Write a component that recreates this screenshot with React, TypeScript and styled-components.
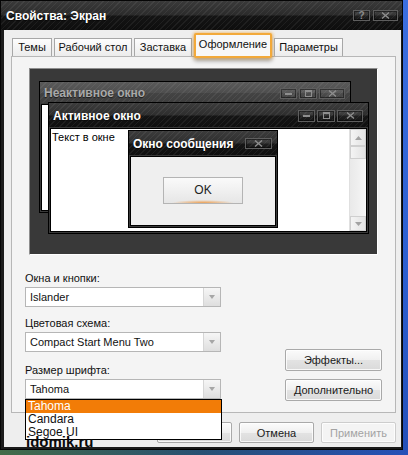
import React from 'react';
import styled, { createGlobalStyle, css } from 'styled-components';

const GlobalStyle = createGlobalStyle`
  html, body {
    margin: 0;
    padding: 0;
  }
  body {
    font-family: "Liberation Sans", Arial, sans-serif;
    font-size: 11px;
    color: #000;
    background: #2c5bc4;
  }
`;

// dark glass look shared by every caption bar
const hatch = (top: string, mid: string, low: string, bottom: string) => css`
  background-image:
    repeating-linear-gradient(135deg, rgba(255, 255, 255, 0.06) 0 1px, transparent 1px 4px),
    linear-gradient(180deg, ${top} 0%, ${mid} 48%, ${low} 52%, ${bottom} 100%);
`;

const Desktop = styled.div`
  position: relative;
  width: 408px;
  height: 455px;
  overflow: hidden;
  background:
    linear-gradient(90deg, rgba(70, 110, 60, 0.9) 0%, rgba(40, 80, 70, 0.6) 50%, rgba(30, 70, 170, 0) 100%) bottom / 100% 8px no-repeat,
    linear-gradient(180deg, #3c6fe0 0%, #2d5fd0 60%, #2550b8 100%);
`;

const Window = styled.div`
  width: 403px;
  height: 450px;
  box-sizing: border-box;
  display: flex;
  flex-direction: column;
  background: #1b1b1b;
  border: 1px solid #050505;
  box-shadow: inset 0 1px 0 #4a4a4a;
`;

const TitleBar = styled.div`
  height: 29px;
  flex: none;
  display: flex;
  align-items: center;
  justify-content: space-between;
  padding: 0 4px 0 5px;
  ${hatch('#3a3a3a', '#2b2b2b', '#141414', '#0e0e0e')}
`;

const Caption = styled.span<{ $dim?: boolean }>`
  font-weight: bold;
  font-size: 12px;
  color: ${(p) => (p.$dim ? '#a9a9a9' : '#fff')};
  white-space: nowrap;
  text-shadow: 0 1px 1px rgba(0, 0, 0, 0.6);
`;

const CaptionButtons = styled.div`
  display: flex;
  gap: 3px;
`;

const CaptionButton = styled.div<{ $w: number; $h?: number }>`
  width: ${(p) => p.$w}px;
  height: ${(p) => p.$h ?? 11}px;
  box-sizing: border-box;
  display: flex;
  align-items: center;
  justify-content: center;
  border: 1px solid #5e5e5e;
  background: linear-gradient(180deg, rgba(255, 255, 255, 0.08), rgba(255, 255, 255, 0.02));
  box-shadow: inset 0 0 0 1px rgba(0, 0, 0, 0.45);
  color: #8c8c8c;
  font-size: 10px;
  font-weight: bold;
  line-height: 1;
`;

const Body = styled.div`
  flex: 1;
  margin: 0 1px 2px 3px;
  padding: 4px 5px 0 7px;
  background: #eeeeee;
  display: flex;
  flex-direction: column;
`;

const TabRow = styled.div`
  flex: none;
  display: flex;
  align-items: flex-end;
  gap: 2px;
  height: 22px;
  padding-left: 1px;
  position: relative;
  z-index: 1;
`;

const Tab = styled.div<{ $w: number; $active?: boolean }>`
  width: ${(p) => p.$w}px;
  box-sizing: border-box;
  text-align: center;
  white-space: nowrap;
  border: 1px solid #a7a7a7;
  border-bottom: none;
  background: linear-gradient(180deg, #fdfdfd 0%, #ececec 100%);
  height: 18px;
  line-height: 17px;
  font-size: 11px;
  color: #111;
  ${(p) =>
    p.$active &&
    css`
      height: 25px;
      line-height: 19px;
      margin-bottom: -2px;
      border: 2px solid #f2a93a;
      border-radius: 2px;
      background: #f8f8f8;
      box-shadow: 0 0 3px 1px rgba(245, 170, 60, 0.55), 0 3px 4px rgba(0, 0, 0, 0.35);
    `}
`;

const Panel = styled.div`
  flex: none;
  height: 357px;
  box-sizing: border-box;
  border: 1px solid #b7b7b7;
  background: #f4f4f4;
  padding: 11px 13px 0 13px;
  display: flex;
  flex-direction: column;
`;

/* ---------- appearance preview ---------- */

const Preview = styled.div`
  position: relative;
  flex: none;
  width: 349px;
  height: 187px;
  margin-left: 4px;
  box-sizing: border-box;
  background: #393939;
  border: 1px solid;
  border-color: #8e8e8e #ffffff #ffffff #8e8e8e;
  overflow: hidden;
`;

const PreviewWindow = styled.div<{ $left: number; $top: number; $w: number; $h: number; $inactive?: boolean }>`
  position: absolute;
  left: ${(p) => p.$left}px;
  top: ${(p) => p.$top}px;
  width: ${(p) => p.$w}px;
  height: ${(p) => p.$h}px;
  box-sizing: border-box;
  display: flex;
  flex-direction: column;
  border: 1px solid #000;
  background: ${(p) => (p.$inactive ? '#484848' : '#1c1c1c')};
  box-shadow: inset 0 0 0 1px ${(p) => (p.$inactive ? '#5a5a5a' : '#3c3c3c')};
`;

const PreviewTitle = styled.div<{ $h: number; $inactive?: boolean }>`
  height: ${(p) => p.$h}px;
  flex: none;
  display: flex;
  align-items: center;
  justify-content: space-between;
  padding: 0 5px 0 4px;
  ${(p) =>
    p.$inactive
      ? hatch('#5a5a5a', '#4e4e4e', '#434343', '#3d3d3d')
      : hatch('#3c3c3c', '#2e2e2e', '#151515', '#0f0f0f')}
`;

const WindowButtons = styled.div`
  display: flex;
  gap: 2px;
`;

const ClientArea = styled.div`
  flex: 1;
  margin: 0 1px 1px 1px;
  display: flex;
  background: #fff;
  border: 1px solid #000;
  box-shadow: 0 0 0 1px #3a3a3a;
  overflow: hidden;
`;

const ClientText = styled.div`
  flex: 1;
  padding: 2px 1px;
  font-size: 11px;
`;

const ScrollBar = styled.div`
  width: 16px;
  display: flex;
  flex-direction: column;
  background: linear-gradient(90deg, #e9e9e9, #f6f6f6);
  border-left: 1px solid #e0e0e0;
`;

const ScrollPart = styled.div<{ $h?: number }>`
  height: ${(p) => (p.$h ? `${p.$h}px` : 'auto')};
  flex: ${(p) => (p.$h ? 'none' : 1)};
  box-sizing: border-box;
  display: flex;
  align-items: center;
  justify-content: center;
  ${(p) =>
    p.$h &&
    css`
      border: 1px solid #cfcfcf;
      background: linear-gradient(90deg, #f4f4f4, #e2e2e2);
    `}
`;

const MessageBody = styled.div`
  flex: 1;
  margin: 0 1px 1px 1px;
  display: flex;
  align-items: center;
  justify-content: center;
  background: #efefef;
  border: 1px solid #000;
  box-shadow: 0 0 0 1px #3a3a3a;
`;

const PreviewOk = styled.div`
  width: 80px;
  height: 27px;
  box-sizing: border-box;
  margin-bottom: 2px;
  display: flex;
  align-items: center;
  justify-content: center;
  font-size: 12px;
  color: #222;
  border: 1px solid #b4b4b4;
  background:
    radial-gradient(ellipse 40% 3px at 50% 100%, rgba(240, 140, 40, 0.8), transparent),
    linear-gradient(180deg, #fafafa 0%, #f0f0f0 50%, #e6e6e6 100%);
`;

/* ---------- settings below the preview ---------- */

const Settings = styled.div`
  flex: none;
  display: flex;
  justify-content: space-between;
`;

const Fields = styled.div`
  width: 196px;
  display: flex;
  flex-direction: column;
`;

const Field = styled.div<{ $gap: number }>`
  margin-top: ${(p) => p.$gap}px;
  position: relative;
`;

const Label = styled.div`
  line-height: 14px;
  color: #111;
`;

const Select = styled.div`
  margin-top: 2px;
  height: 20px;
  box-sizing: border-box;
  display: flex;
  border: 1px solid #b6b6b6;
  background: #fff;
`;

const SelectValue = styled.div`
  flex: 1;
  padding-left: 4px;
  line-height: 18px;
  white-space: nowrap;
  color: #111;
`;

const SelectArrow = styled.div`
  width: 16px;
  display: flex;
  align-items: center;
  justify-content: center;
  border-left: 1px solid #d6d6d6;
  background: linear-gradient(180deg, #f6f6f6, #dedede);

  &::after {
    content: '';
    border-left: 3px solid transparent;
    border-right: 3px solid transparent;
    border-top: 4px solid #a6a6a6;
  }
`;

const DropList = styled.div`
  position: absolute;
  left: 0;
  top: 100%;
  width: 197px;
  box-sizing: border-box;
  border: 1px solid #000;
  background: #fff;
  z-index: 2;
`;

const DropItem = styled.div<{ $selected?: boolean }>`
  height: 13px;
  line-height: 13px;
  padding-left: 2px;
  font-size: 12px;
  color: ${(p) => (p.$selected ? '#fff' : '#111')};
  background: ${(p) => (p.$selected ? '#f27c07' : 'transparent')};
`;

const SideButtons = styled.div`
  display: flex;
  flex-direction: column;
  justify-content: flex-end;
  gap: 8px;
  margin-bottom: -2px;
`;

const Button = styled.div<{ $w: number; $h?: number; $disabled?: boolean }>`
  width: ${(p) => p.$w}px;
  height: ${(p) => p.$h ?? 22}px;
  box-sizing: border-box;
  display: flex;
  align-items: center;
  justify-content: center;
  font-size: 11px;
  white-space: nowrap;
  color: ${(p) => (p.$disabled ? '#a3a3a3' : '#1a1a1a')};
  border: 1px solid ${(p) => (p.$disabled ? '#cdcdcd' : '#a9a9a9')};
  border-radius: 2px;
  background: ${(p) =>
    p.$disabled
      ? '#f4f4f4'
      : 'linear-gradient(180deg, #fbfbfb 0%, #f0f0f0 50%, #e3e3e3 51%, #dadada 100%)'};
  box-shadow: inset 0 0 0 1px rgba(255, 255, 255, 0.8);
`;

const DialogButtons = styled.div`
  flex: none;
  display: flex;
  justify-content: flex-end;
  gap: 7px;
  margin-top: 9px;
`;

const Watermark = styled.div`
  position: absolute;
  left: 26px;
  top: 433px;
  font-size: 15px;
  font-weight: bold;
  color: #0a0a0a;
  z-index: 3;
`;

/* ---------- small glyphs ---------- */

const Glyph = ({ kind }: { kind: 'min' | 'max' | 'close' }) => {
  const stroke = '#8e8e8e';
  if (kind === 'min') {
    return (
      <svg width="7" height="7" viewBox="0 0 7 7">
        <rect x="0" y="3" width="7" height="2" fill={stroke} />
      </svg>
    );
  }
  if (kind === 'max') {
    return (
      <svg width="7" height="7" viewBox="0 0 7 7">
        <rect x="0.5" y="0.5" width="6" height="6" fill="none" stroke={stroke} />
        <rect x="0" y="0" width="7" height="2" fill={stroke} />
      </svg>
    );
  }
  return (
    <svg width="9" height="7" viewBox="0 0 9 7">
      <path d="M1 0.5 L8 6.5 M8 0.5 L1 6.5" stroke={stroke} strokeWidth="1.4" />
    </svg>
  );
};

const Arrow = ({ up }: { up?: boolean }) => (
  <svg width="7" height="4" viewBox="0 0 7 4">
    <path d={up ? 'M0 4 L3.5 0 L7 4 Z' : 'M0 0 L3.5 4 L7 0 Z'} fill="#a2a2a2" />
  </svg>
);

const WindowControls = ({ h }: { h: number }) => (
  <WindowButtons>
    <CaptionButton $w={17} $h={h}>
      <Glyph kind="min" />
    </CaptionButton>
    <CaptionButton $w={18} $h={h}>
      <Glyph kind="max" />
    </CaptionButton>
    <CaptionButton $w={26} $h={h}>
      <Glyph kind="close" />
    </CaptionButton>
  </WindowButtons>
);

const tabs = [
  { label: 'Темы', w: 40 },
  { label: 'Рабочий стол', w: 78 },
  { label: 'Заставка', w: 58 },
  { label: 'Оформление', w: 78, active: true },
  { label: 'Параметры', w: 69 },
];

export default function App() {
  return (
    <Desktop>
      <GlobalStyle />
      <Window>
        <TitleBar>
          <Caption>Свойства: Экран</Caption>
          <CaptionButtons>
            <CaptionButton $w={17}>?</CaptionButton>
            <CaptionButton $w={25}>
              <Glyph kind="close" />
            </CaptionButton>
          </CaptionButtons>
        </TitleBar>

        <Body>
          <TabRow>
            {tabs.map((t) => (
              <Tab key={t.label} $w={t.w} $active={t.active}>
                {t.label}
              </Tab>
            ))}
          </TabRow>

          <Panel>
            <Preview>
              <PreviewWindow $inactive $left={9} $top={12} $w={312} $h={132}>
                <PreviewTitle $inactive $h={22}>
                  <Caption $dim>Неактивное окно</Caption>
                  <WindowControls h={11} />
                </PreviewTitle>
                <ClientArea />
              </PreviewWindow>

              <PreviewWindow $left={18} $top={33} $w={321} $h={132}>
                <PreviewTitle $h={25}>
                  <Caption>Активное окно</Caption>
                  <WindowControls h={12} />
                </PreviewTitle>
                <ClientArea>
                  <ClientText>Текст в окне</ClientText>
                  <ScrollBar>
                    <ScrollPart $h={17}>
                      <Arrow up />
                    </ScrollPart>
                    <ScrollPart $h={13} />
                    <ScrollPart />
                    <ScrollPart $h={15}>
                      <Arrow />
                    </ScrollPart>
                  </ScrollBar>
                </ClientArea>
              </PreviewWindow>

              <PreviewWindow $left={98} $top={61} $w={150} $h={98}>
                <PreviewTitle $h={25}>
                  <Caption>Окно сообщения</Caption>
                  <CaptionButton $w={27} $h={11}>
                    <Glyph kind="close" />
                  </CaptionButton>
                </PreviewTitle>
                <MessageBody>
                  <PreviewOk>OK</PreviewOk>
                </MessageBody>
              </PreviewWindow>
            </Preview>

            <Settings>
              <Fields>
                <Field $gap={16}>
                  <Label>Окна и кнопки:</Label>
                  <Select>
                    <SelectValue>Islander</SelectValue>
                    <SelectArrow />
                  </Select>
                </Field>
                <Field $gap={9}>
                  <Label>Цветовая схема:</Label>
                  <Select>
                    <SelectValue>Compact Start Menu Two</SelectValue>
                    <SelectArrow />
                  </Select>
                </Field>
                <Field $gap={11}>
                  <Label>Размер шрифта:</Label>
                  <Select>
                    <SelectValue>Tahoma</SelectValue>
                    <SelectArrow />
                  </Select>
                  <DropList>
                    <DropItem $selected>Tahoma</DropItem>
                    <DropItem>Candara</DropItem>
                    <DropItem>Segoe UI</DropItem>
                  </DropList>
                </Field>
              </Fields>

              <SideButtons>
                <Button $w={97}>Эффекты...</Button>
                <Button $w={97}>Дополнительно</Button>
              </SideButtons>
            </Settings>
          </Panel>

          <DialogButtons>
            <Button $w={75} $h={21}>OK</Button>
            <Button $w={75} $h={21}>Отмена</Button>
            <Button $w={75} $h={21} $disabled>
              Применить
            </Button>
          </DialogButtons>
        </Body>
      </Window>
      <Watermark>idomik.ru</Watermark>
    </Desktop>
  );
}
